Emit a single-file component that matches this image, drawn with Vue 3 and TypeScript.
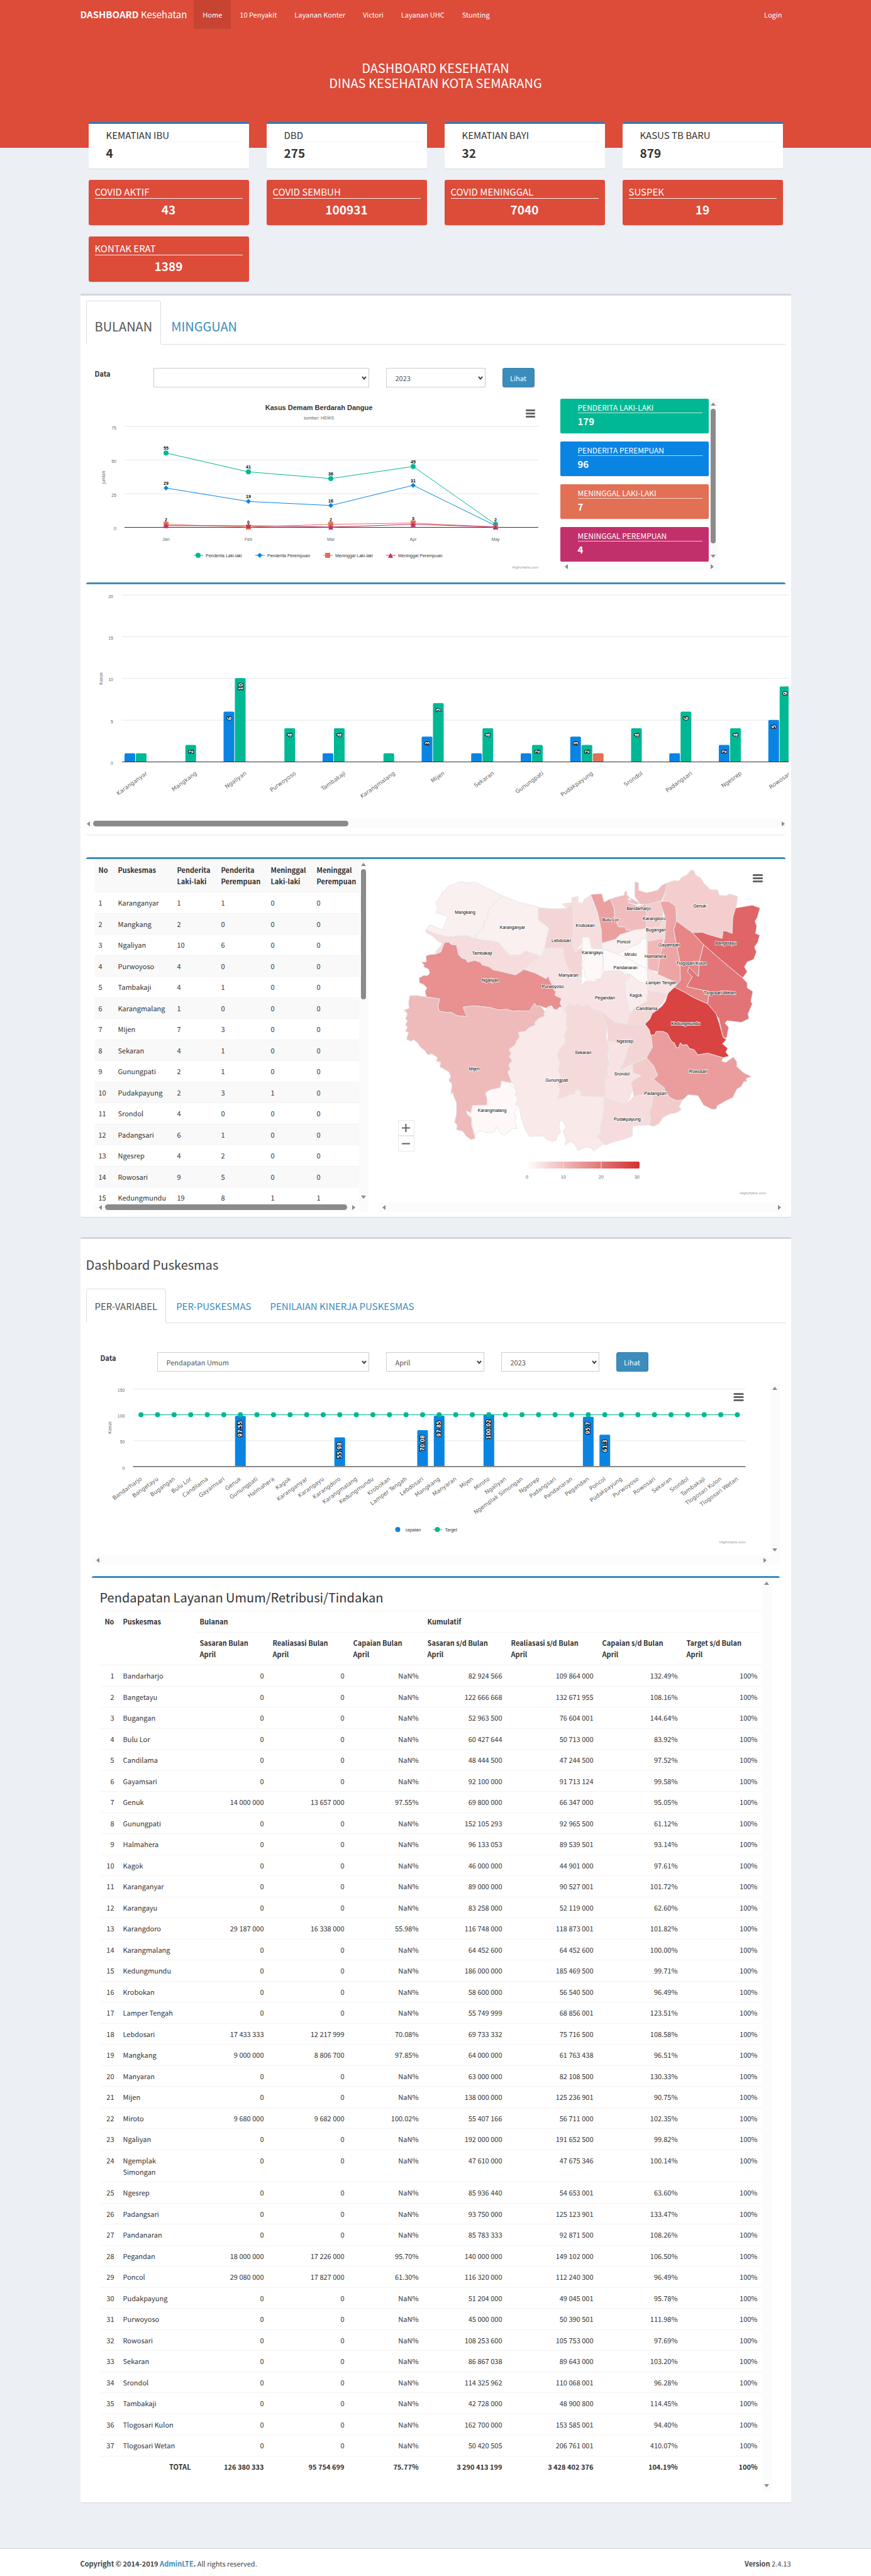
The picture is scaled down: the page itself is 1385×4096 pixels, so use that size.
<script setup lang="ts">
import { ref } from 'vue'

interface Tile { label: string; value: string }

const navItems = ['Home', '10 Penyakit', 'Layanan Konter', 'Victori', 'Layanan UHC', 'Stunting']

const whiteTiles: Tile[] = [
  { label: 'KEMATIAN IBU', value: '4' },
  { label: 'DBD', value: '275' },
  { label: 'KEMATIAN BAYI', value: '32' },
  { label: 'KASUS TB BARU', value: '879' },
]
const redTiles: Tile[] = [
  { label: 'COVID AKTIF', value: '43' },
  { label: 'COVID SEMBUH', value: '100931' },
  { label: 'COVID MENINGGAL', value: '7040' },
  { label: 'SUSPEK', value: '19' },
  { label: 'KONTAK ERAT', value: '1389' },
]
const caseTiles = [
  { label: 'PENDERITA LAKI-LAKI', value: '179', tone: 'green' },
  { label: 'PENDERITA PEREMPUAN', value: '96', tone: 'blue' },
  { label: 'MENINGGAL LAKI-LAKI', value: '7', tone: 'orange' },
  { label: 'MENINGGAL PEREMPUAN', value: '4', tone: 'pink' },
]

const disease = ref('')
const yearA = ref('2023')
const variable = ref('Pendapatan Umum')
const month = ref('April')
const yearB = ref('2023')

/* Monthly line chart */
const months = ['Jan', 'Feb', 'Mar', 'Apr', 'May']
const monthX = (i: number) => 127 + i * 131
const caseY = (v: number) => 204 - v * 2.14
const lineSeries = [
  { name: 'Penderita Laki-laki', color: '#00b894', shape: 'circle', data: [55, 41, 36, 45, 2], lx: 178 },
  { name: 'Penderita Perempuan', color: '#0984e3', shape: 'diamond', data: [29, 19, 16, 31, 1], lx: 276 },
  { name: 'Meninggal Laki-laki', color: '#e17055', shape: 'square', data: [2, 0, 2, 3, 0], lx: 384 },
  { name: 'Meninggal Perempuan', color: '#c2306b', shape: 'triangle', data: [1, 1, 0, 2, 0], lx: 484 },
]
const linePoints = (data: number[]) => data.map((v, i) => `${monthX(i)},${caseY(v)}`).join(' ')
const lineLabels = [
  { i: 0, v: 55 }, { i: 1, v: 41 }, { i: 2, v: 36 }, { i: 3, v: 45 }, { i: 4, v: 2 },
  { i: 0, v: 29 }, { i: 1, v: 19 }, { i: 2, v: 16 }, { i: 3, v: 31 },
  { i: 0, v: 2 }, { i: 1, v: 0 }, { i: 2, v: 2 }, { i: 3, v: 3 },
]
function markerPath(shape: string, x: number, y: number): string {
  if (shape === 'circle') return `M${x - 4},${y}a4,4 0 1,0 8,0a4,4 0 1,0 -8,0`
  if (shape === 'diamond') return `M${x},${y - 4}l4,4l-4,4l-4,-4z`
  if (shape === 'square') return `M${x - 4},${y - 4}h8v8h-8z`
  return `M${x},${y - 4}l4,8h-8z`
}

/* Cases per puskesmas: [name, male, female, male deaths, female deaths] */
type CaseRow = [string, number, number, number, number]
const cases: CaseRow[] = [
  ['Karanganyar', 1, 1, 0, 0], ['Mangkang', 2, 0, 0, 0], ['Ngaliyan', 10, 6, 0, 0],
  ['Purwoyoso', 4, 0, 0, 0], ['Tambakaji', 4, 1, 0, 0], ['Karangmalang', 1, 0, 0, 0],
  ['Mijen', 7, 3, 0, 0], ['Sekaran', 4, 1, 0, 0], ['Gunungpati', 2, 1, 0, 0],
  ['Pudakpayung', 2, 3, 1, 0], ['Srondol', 4, 0, 0, 0], ['Padangsari', 6, 1, 0, 0],
  ['Ngesrep', 4, 2, 0, 0], ['Rowosari', 9, 5, 0, 0], ['Kedungmundu', 19, 8, 1, 1],
]
const bars = cases.slice(0, 14).flatMap(([, male, female, dead], i) => {
  const x = 78 + i * 78.75
  return [
    { x: x - 17, v: female, color: '#0984e3' },
    { x: x + 1, v: male, color: '#00b894' },
    { x: x + 19, v: dead, color: '#e17055' },
  ].filter((b) => b.v > 0)
})
const barTop = (v: number) => 282 - v * 13.27
const barPath = (x: number, top: number, base: number) =>
  `M${x},${base}V${top + 2}q0,-2 2,-2h13q2,0 2,2V${base}z`

/* Revenue table */
type RevenueRow = [string, string, string, string, string, string, string]
const z = (name: string, a: string, b: string, c: string): RevenueRow => [name, '0', '0', 'NaN%', a, b, c]
const revenue: RevenueRow[] = [
  z('Bandarharjo', '82 924 566', '109 864 000', '132.49%'),
  z('Bangetayu', '122 666 668', '132 671 955', '108.16%'),
  z('Bugangan', '52 963 500', '76 604 001', '144.64%'),
  z('Bulu Lor', '60 427 644', '50 713 000', '83.92%'),
  z('Candilama', '48 444 500', '47 244 500', '97.52%'),
  z('Gayamsari', '92 100 000', '91 713 124', '99.58%'),
  ['Genuk', '14 000 000', '13 657 000', '97.55%', '69 800 000', '66 347 000', '95.05%'],
  z('Gunungpati', '152 105 293', '92 965 500', '61.12%'),
  z('Halmahera', '96 133 053', '89 539 501', '93.14%'),
  z('Kagok', '46 000 000', '44 901 000', '97.61%'),
  z('Karanganyar', '89 000 000', '90 527 001', '101.72%'),
  z('Karangayu', '83 258 000', '52 119 000', '62.60%'),
  ['Karangdoro', '29 187 000', '16 338 000', '55.98%', '116 748 000', '118 873 001', '101.82%'],
  z('Karangmalang', '64 452 600', '64 452 600', '100.00%'),
  z('Kedungmundu', '186 000 000', '185 469 500', '99.71%'),
  z('Krobokan', '58 600 000', '56 540 500', '96.49%'),
  z('Lamper Tengah', '55 749 999', '68 856 001', '123.51%'),
  ['Lebdosari', '17 433 333', '12 217 999', '70.08%', '69 733 332', '75 716 500', '108.58%'],
  ['Mangkang', '9 000 000', '8 806 700', '97.85%', '64 000 000', '61 763 438', '96.51%'],
  z('Manyaran', '63 000 000', '82 108 500', '130.33%'),
  z('Mijen', '138 000 000', '125 236 901', '90.75%'),
  ['Miroto', '9 680 000', '9 682 000', '100.02%', '55 407 166', '56 711 000', '102.35%'],
  z('Ngaliyan', '192 000 000', '191 652 500', '99.82%'),
  z('Ngemplak Simongan', '47 610 000', '47 675 346', '100.14%'),
  z('Ngesrep', '85 936 440', '54 653 001', '63.60%'),
  z('Padangsari', '93 750 000', '125 123 901', '133.47%'),
  z('Pandanaran', '85 783 333', '92 871 500', '108.26%'),
  ['Pegandan', '18 000 000', '17 226 000', '95.70%', '140 000 000', '149 102 000', '106.50%'],
  ['Poncol', '29 080 000', '17 827 000', '61.30%', '116 320 000', '112 240 300', '96.49%'],
  z('Pudakpayung', '51 204 000', '49 045 001', '95.78%'),
  z('Purwoyoso', '45 000 000', '50 390 501', '111.98%'),
  z('Rowosari', '108 253 600', '105 753 000', '97.69%'),
  z('Sekaran', '86 867 038', '89 643 000', '103.20%'),
  z('Srondol', '114 325 962', '110 068 001', '96.28%'),
  z('Tambakaji', '42 728 000', '48 900 800', '114.45%'),
  z('Tlogosari Kulon', '162 700 000', '153 585 001', '94.40%'),
  z('Tlogosari Wetan', '50 420 505', '206 761 001', '410.07%'),
]
const reachX = (i: number) => 77.7 + i * 26.34
const reachBars = revenue
  .map((r, i) => ({ x: reachX(i), v: parseFloat(r[3]) }))
  .filter((b) => !Number.isNaN(b.v))
const reachY = (v: number) => 132.6 - v * 0.823

/* District map, outlines on a 1568 unit grid */
const MX = 0.4429
const MY = 0.3926
interface District { color: string; d: string }
const districts: District[] = [
  { color: '#faf0f0', d: '340,156 360,160 382,157 398,164 425,180 450,194 482,212 474,228 460,240 450,250 433,266 430,298 418,320 412,345 395,360 388,372 390,388 370,376 350,374 320,375 290,379 245,368 208,350 222,330 268,350 278,322 288,296 245,280 250,262 243,240 262,212 266,200 280,185 290,172 315,163 325,157' },
  { color: '#faf0f0', d: '482,212 540,238 612,258 612,310 632,326 650,345 647,390 635,430 630,460 600,450 565,435 550,452 510,453 490,430 470,403 445,396 390,392 388,372 400,355 415,340 418,320 430,298 433,266 460,240' },
  { color: '#f6dcdc', d: '208,350 245,368 290,379 350,374 390,388 445,396 470,403 490,430 510,453 550,452 565,435 600,450 622,462 590,480 565,508 530,533 500,525 450,513 425,500 400,480 360,480 340,466 325,455 318,415 290,400 275,402 262,440 245,450 243,440 268,405 250,395 232,375 208,360' },
  { color: '#e99090', d: '275,402 290,400 300,410 318,412 325,450 338,466 350,468 358,482 383,474 404,482 410,492 435,500 450,513 470,517 530,533 548,520 560,510 600,525 640,548 648,536 652,552 665,580 668,595 675,600 672,615 695,628 690,648 697,662 685,665 680,674 668,672 660,658 650,660 640,668 618,658 605,660 598,648 590,662 580,680 540,678 520,680 500,672 470,675 440,665 380,658 342,663 355,702 320,698 300,685 285,685 255,680 252,660 257,630 210,622 205,600 212,585 200,572 185,565 184,545 200,535 215,535 222,525 218,510 200,500 202,492 192,480 210,480 208,455 225,450 245,448 262,440' },
  { color: '#efbaba', d: '150,617 175,616 210,622 257,630 252,660 255,680 285,685 300,685 320,698 355,702 342,663 380,658 440,665 470,675 500,672 520,680 540,678 580,680 590,662 598,648 605,660 618,658 635,680 632,692 636,700 615,708 600,725 600,737 580,745 565,762 540,765 545,785 533,800 530,815 506,835 515,850 508,865 518,880 505,898 512,915 502,925 510,950 520,970 480,963 475,990 440,998 422,1010 428,1035 428,1060 375,1062 370,1092 353,1083 358,1100 372,1110 372,1140 378,1160 385,1195 370,1200 352,1185 340,1165 318,1160 320,1140 311,1130 318,1095 318,1050 310,1030 305,1010 298,1015 302,975 290,960 298,945 290,925 270,912 258,905 262,885 245,883 250,868 230,852 215,857 205,840 188,825 180,810 165,795 155,802 138,793 146,765 135,762 142,745 135,735 142,718 135,710 142,690 130,675 148,668 146,645' },
  { color: '#fef8f8', d: '480,963 510,970 518,985 535,998 530,1020 540,1035 530,1058 542,1062 525,1090 530,1105 528,1130 536,1155 520,1155 490,1182 478,1175 460,1148 455,1168 430,1172 410,1165 395,1168 385,1185 375,1150 372,1110 358,1100 370,1092 375,1062 428,1060 428,1035 422,1010 440,998 475,990' },
  { color: '#f9e9e9', d: '640,673 650,660 668,672 680,674 697,665 715,690 712,735 718,745 705,780 710,805 690,830 680,860 690,890 685,920 693,945 682,975 690,1000 682,1035 720,1020 740,1015 745,998 765,1000 765,1022 850,1027 845,1055 852,1070 845,1100 843,1130 835,1150 838,1170 820,1185 850,1215 830,1230 810,1247 800,1232 780,1230 755,1245 740,1215 725,1208 708,1222 712,1195 700,1165 712,1150 697,1122 688,1128 686,1150 692,1170 680,1185 676,1202 662,1208 640,1198 630,1185 580,1187 565,1160 550,1110 542,1062 530,1058 540,1035 530,1020 535,998 515,965 510,950 502,925 512,915 505,898 518,880 508,865 515,850 506,835 530,815 533,800 545,785 540,765 565,762 580,745 600,737 600,725 615,708 636,700 632,692' },
  { color: '#f5dada', d: '715,655 728,648 740,660 755,648 765,662 790,650 810,672 835,670 855,705 860,740 855,780 865,830 860,860 866,890 858,915 862,940 850,960 855,1000 848,1027 765,1022 765,1000 745,998 740,1015 720,1020 682,1035 690,1000 682,975 693,945 685,920 690,890 680,860 690,830 710,805 705,780 718,745 712,735 715,690 697,665' },
  { color: '#f8e3e4', d: '765,575 780,558 810,560 836,545 848,518 905,515 925,532 940,530 940,548 920,558 925,600 930,640 940,690 930,732 885,725 855,700 835,680 810,672 790,650 765,662 755,610' },
  { color: '#f8e3e4', d: '635,425 700,422 708,480 735,535 768,540 765,580 768,630 765,662 755,648 740,660 728,648 715,655 705,680 697,662 690,648 695,628 672,615 675,600 665,580 652,552 648,536 640,548 600,525 560,510 590,480 622,462' },
  { color: '#f4d5d5', d: '612,260 660,265 710,264 735,245 738,320 735,415 745,440 768,420 768,540 735,535 708,480 700,422 635,425 640,390 650,345 632,326 612,310' },
  { color: '#f7dede', d: '697,245 732,240 732,220 755,215 755,240 770,242 778,225 800,210 808,240 825,280 832,320 838,375 840,428 805,425 795,380 770,380 765,410 745,440 735,415 738,320 735,245 710,260' },
  { color: '#ec9f9f', d: '800,207 840,204 848,238 870,225 885,265 885,300 900,338 925,338 928,352 942,350 942,362 905,370 890,388 840,404 838,350 825,280' },
  { color: '#f1bcbe', d: '870,225 900,215 920,210 922,196 930,195 930,210 938,215 935,240 970,255 1000,245 1000,345 942,362 942,350 928,352 925,338 900,338 885,300 885,265' },
  { color: '#f1bcbe', d: '958,155 972,160 972,190 1000,200 1040,190 1055,170 1075,160 1070,190 1055,232 1000,248 976,245 958,215' },
  { color: '#f1bcbe', d: '930,225 946,232 942,220 975,243 965,248 940,240' },
  { color: '#f4cccc', d: '1000,248 1055,232 1060,300 1048,340 1000,345' },
  { color: '#f5d8d8', d: '1000,340 1048,340 1060,300 1070,320 1065,385 1003,397' },
  { color: '#f1b8b8', d: '1003,397 1062,385 1052,440 1048,522 1005,510' },
  { color: '#eda4a4', d: '1050,240 1065,232 1085,235 1108,255 1110,315 1098,350 1110,420 1120,480 1122,555 1112,567 1040,530 1052,440 1066,385 1070,310' },
  { color: '#f4cece', d: '1075,160 1100,150 1115,152 1130,135 1145,128 1160,108 1172,112 1176,128 1195,140 1205,160 1230,188 1255,188 1262,210 1285,212 1300,205 1328,215 1322,262 1310,300 1308,365 1285,355 1275,355 1272,385 1225,370 1200,360 1165,362 1108,315 1105,255 1080,235 1058,235 1070,190' },
  { color: '#e06568', d: '1320,262 1380,250 1408,262 1398,300 1390,315 1396,335 1392,365 1407,372 1400,400 1388,420 1395,440 1385,470 1362,480 1352,500 1362,520 1345,545 1265,470 1205,410 1165,362 1200,360 1225,370 1272,385 1275,355 1285,355 1308,365 1310,300' },
  { color: '#e88585', d: '1108,315 1165,362 1205,410 1190,480 1187,540 1152,500 1148,520 1165,540 1145,580 1225,600 1220,650 1170,625 1140,605 1100,582 1122,555 1120,480 1098,350' },
  { color: '#e27377', d: '1205,410 1265,470 1345,545 1362,565 1362,585 1382,600 1375,640 1380,650 1365,690 1368,710 1340,725 1290,718 1282,728 1295,745 1288,790 1275,785 1260,710 1220,650 1225,600 1145,580 1165,540 1148,520 1152,500 1187,540 1190,480' },
  { color: '#d94342', d: '1100,582 1140,605 1170,625 1220,650 1250,690 1262,730 1275,785 1287,795 1273,812 1292,830 1285,845 1297,862 1275,868 1220,850 1185,857 1170,835 1155,832 1145,815 1130,818 1122,808 1115,828 1108,828 1100,808 1090,802 1075,770 1060,762 1035,762 1030,775 1015,778 1010,755 995,732 1012,712 1020,690 1055,660 1068,640 1078,605' },
  { color: '#eb9d9e', d: '1015,778 1030,775 1035,762 1060,762 1075,770 1090,802 1100,808 1108,828 1115,828 1122,808 1130,818 1145,815 1155,832 1170,835 1185,857 1220,850 1275,868 1270,882 1285,887 1312,865 1325,885 1325,905 1350,930 1378,945 1358,952 1360,965 1350,965 1340,985 1325,995 1310,1030 1290,1040 1255,1062 1250,1077 1235,1077 1205,1060 1185,1022 1150,1018 1125,1045 1105,1040 1085,1030 1065,1000 1025,955 1040,940 1025,900 1000,868 1020,825' },
  { color: '#f5d8d8', d: '1005,597 1035,600 1075,610 1060,645 1030,680 1020,690 1012,712 995,732 932,732 940,690 960,665 1000,640' },
  { color: '#f4d5d5', d: '835,678 885,725 930,732 995,732 1010,755 1018,790 1022,825 1000,868 950,893 905,918 920,880 940,815 862,800 860,740' },
  { color: '#f8e3e4', d: '862,800 940,815 920,880 905,918 950,895 952,930 982,940 960,955 945,970 950,1000 940,1030 925,1058 890,1045 850,1028 855,1000 850,960 862,940 858,915 866,890' },
  { color: '#f3cbcb', d: '950,895 1000,868 1025,900 1040,940 1025,955 1065,990 1065,1005 1085,1030 1105,1042 1130,1038 1118,1065 1125,1080 1105,1092 1085,1095 1060,1110 1045,1135 1025,1147 1010,1140 1015,1110 1010,1090 1018,1070 1025,1010 955,1025 945,970 960,955 982,940 952,930' },
  { color: '#f6dcdd', d: '850,1028 925,1058 955,1025 1025,1010 1018,1070 1010,1090 1015,1110 1010,1140 950,1145 950,1185 915,1200 885,1208 852,1222 822,1188 838,1170 835,1150 845,1100' },
  { color: '#f9ecec', d: '920,560 940,548 940,530 975,560 1005,570 1005,600 1000,640 960,665 940,685 930,640' },
  { color: '#f8e3e4', d: '1005,508 1040,530 1112,567 1098,585 1075,610 1035,600 1005,597' },
  { color: '#fef8f8', d: '770,380 795,380 803,425 843,428 843,490 838,548 812,550 795,560 780,540 778,515 765,490 780,465 768,440' },
  { color: '#faf0f0', d: '840,404 890,388 905,370 960,350 1000,345 1000,385 985,385 975,405 935,425 895,448 843,428' },
  { color: '#fefafa', d: '895,448 935,425 975,405 985,385 1000,385 1003,508 965,490 955,478' },
  { color: '#fefafa', d: '843,428 895,448 955,478 965,490 1003,508 1005,570 975,560 940,530 905,515 848,518' },
]
const places: [string, number, number][] = [
  ['Mangkang', 349, 277], ['Karanganyar', 519, 339], ['Tambakaji', 410, 444], ['Ngaliyan', 440, 552],
  ['Purwoyoso', 664, 577], ['Manyaran', 720, 532], ['Lebdosari', 694, 391], ['Krobokan', 780, 330],
  ['Bulu Lor', 871, 308], ['Bandarharjo', 972, 262], ['Karangdoro', 1028, 302], ['Bugangan', 1034, 348],
  ['Gayamsari', 1081, 409], ['Genuk', 1191, 251], ['Bangetayu', 1285, 402], ['Poncol', 918, 398],
  ['Karangayu', 806, 440], ['Miroto', 943, 448], ['Halmahera', 1032, 457], ['Tlogosari Kulon', 1162, 485],
  ['Pandanaran', 925, 502], ['Lamper Tengah', 1053, 562], ['Pegandan', 851, 625], ['Kagok', 962, 613],
  ['Candilama', 1001, 667], ['Tlogosari Wetan', 1263, 604], ['Kedungmundu', 1141, 729], ['Ngesrep', 923, 801],
  ['Sekaran', 773, 846], ['Mijen', 382, 911], ['Gunungpati', 678, 957], ['Srondol', 912, 933],
  ['Rowosari', 1186, 922], ['Padangsari', 1032, 1011], ['Karangmalang', 446, 1080], ['Pudakpayung', 931, 1115],
]
</script>

<template>
  <div class="page">
    <header class="hero">
      <nav class="navbar wrap">
        <a href="#" class="brand"><b>DASHBOARD</b> Kesehatan</a>
        <a v-for="(item, i) in navItems" :key="item" href="#" class="nav-link" :class="{ active: i === 0 }">{{ item }}</a>
        <a href="#" class="nav-link login">Login</a>
      </nav>
      <h1>DASHBOARD KESEHATAN<br />DINAS KESEHATAN KOTA SEMARANG</h1>
    </header>

    <main class="wrap">
      <section class="tiles">
        <div v-for="t in whiteTiles" :key="t.label" class="tile white">
          <div class="tile-label">{{ t.label }}</div>
          <div class="tile-value">{{ t.value }}</div>
        </div>
        <div v-for="t in redTiles" :key="t.label" class="tile red">
          <div class="tile-label">{{ t.label }}</div>
          <div class="tile-value">{{ t.value }}</div>
        </div>
      </section>

      <section class="box">
        <div class="tabs big">
          <a href="#" class="tab active">BULANAN</a>
          <a href="#" class="tab">MINGGUAN</a>
        </div>
        <form class="filters" @submit.prevent>
          <label for="disease">Data</label>
          <span class="select wide">
            <select id="disease" v-model="disease"><option value=""></option></select>
            <svg class="chev" viewBox="0 0 8 6"><path d="M1 1l3 3.6L7 1" /></svg>
          </span>
          <span class="select">
            <select v-model="yearA" aria-label="Tahun"><option>2023</option></select>
            <svg class="chev" viewBox="0 0 8 6"><path d="M1 1l3 3.6L7 1" /></svg>
          </span>
          <button type="submit">Lihat</button>
        </form>

        <div class="monthly">
          <svg class="line-chart chart" viewBox="0 0 740 292">
            <text class="title" x="370" y="18" text-anchor="middle">Kasus Demam Berdarah Dangue</text>
            <text class="t" x="370" y="33" text-anchor="middle">sumber: HEWS</text>
            <g class="menu"><rect v-for="k in 3" :key="k" x="699" :y="12 + k * 5" width="15" height="3" rx="1" /></g>
            <g v-for="v in [0, 25, 50, 75]" :key="v">
              <rect :class="v ? 'grid' : 'axis'" x="61" :y="caseY(v)" width="658" height="1" />
              <text class="t" x="48" :y="caseY(v) + 5" text-anchor="end">{{ v }}</text>
            </g>
            <text class="t" transform="translate(30 125) rotate(-90)" text-anchor="middle">jumlah</text>
            <text v-for="(m, i) in months" :key="m" class="t" :x="monthX(i)" y="226" text-anchor="middle">{{ m }}</text>
            <g v-for="s in lineSeries" :key="s.name">
              <polyline :points="linePoints(s.data)" fill="none" :stroke="s.color" />
              <path v-for="(v, i) in s.data" :key="i" :d="markerPath(s.shape, monthX(i), caseY(v))" :fill="s.color" />
              <path :d="`M${s.lx - 7},249h15`" :stroke="s.color" />
              <path :d="markerPath(s.shape, s.lx, 249)" :fill="s.color" />
              <text class="t dark" :x="s.lx + 12" y="252">{{ s.name }}</text>
            </g>
            <text v-for="(l, k) in lineLabels" :key="k" class="val" :x="monthX(l.i)" :y="caseY(l.v) - 5" text-anchor="middle">{{ l.v }}</text>
            <text class="credit" x="719" y="270" text-anchor="end">Highcharts.com</text>
          </svg>

          <div class="case-panel">
            <div class="case-main">
              <div class="case-list">
                <div v-for="t in caseTiles" :key="t.label" class="case" :class="t.tone">
                  <div class="case-label">{{ t.label }}</div>
                  <div class="case-value">{{ t.value }}</div>
                </div>
              </div>
              <div class="sb v"><i class="up"></i><span class="thumb case-thumb"></span><i class="down"></i></div>
            </div>
            <div class="sb h"><i class="left"></i><i class="right"></i></div>
          </div>
        </div>

        <div class="subbox bar-box">
          <svg class="bar-chart chart" viewBox="0 0 1117 373">
            <g v-for="v in [0, 5, 10, 15, 20]" :key="v">
              <rect class="grid" x="57" :y="barTop(v)" width="1060" height="1" />
              <text class="t" x="43" :y="barTop(v) + 5" text-anchor="end">{{ v }}</text>
            </g>
            <text class="t" transform="translate(26 150) rotate(-90)" text-anchor="middle">Kasus</text>
            <g v-for="(b, k) in bars" :key="k">
              <path :d="barPath(b.x, barTop(b.v), 282)" :fill="b.color" />
              <text v-if="b.v > 1" class="bar-val" :transform="`translate(${b.x + 12} ${barTop(b.v) + 8}) rotate(-90)`" text-anchor="end">{{ b.v }}</text>
            </g>
            <rect class="axis" x="57" y="282" width="1060" height="1" />
            <text v-for="(c, i) in cases.slice(0, 14)" :key="c[0]" class="cat" :transform="`translate(${98 + i * 78.75} 302) rotate(-36)`" text-anchor="end">{{ c[0] }}</text>
          </svg>
          <div class="sb h bar-sb"><i class="left"></i><span class="thumb bar-thumb"></span><i class="right"></i></div>
        </div>

        <div class="subbox map-box">
          <div class="case-table">
            <div class="scroll-main">
              <div class="clip">
                <table class="small-table">
                  <colgroup><col class="c1" /><col class="c2" /><col class="c3" /><col class="c4" /><col class="c5" /><col class="c6" /></colgroup>
                  <thead>
                    <tr><th>No</th><th>Puskesmas</th><th>Penderita Laki-laki</th><th>Penderita Perempuan</th><th>Meninggal Laki-laki</th><th>Meninggal Perempuan</th></tr>
                  </thead>
                  <tbody>
                    <tr v-for="(c, i) in cases" :key="c[0]"><td>{{ i + 1 }}</td><td v-for="(v, k) in c" :key="k">{{ v }}</td></tr>
                  </tbody>
                </table>
              </div>
              <div class="sb v"><i class="up"></i><span class="thumb table-thumb"></span><i class="down"></i></div>
            </div>
            <div class="sb h cornered"><i class="left"></i><span class="thumb wide-thumb"></span><i class="right"></i></div>
          </div>

          <div class="map-col">
            <div class="map-area">
              <svg class="chart map-svg" viewBox="0 0 648 546">
                <defs>
                  <linearGradient id="scale"><stop offset="0" stop-color="#fff" /><stop offset="1" stop-color="#d32f2f" /></linearGradient>
                </defs>
                <g :transform="`translate(-16 -25) scale(${MX} ${MY})`" class="land">
                  <polygon v-for="(m, k) in districts" :key="k" :points="m.d" :fill="m.color" />
                </g>
                <text v-for="p in places" :key="p[0]" class="place" :x="p[1] * MX - 16" :y="p[2] * MY - 22" text-anchor="middle">{{ p[0] }}</text>
                <g class="menu"><rect v-for="k in 3" :key="k" x="596" :y="19 + k * 5" width="16" height="3" rx="1" /></g>
                <rect x="236" y="481" width="180" height="11" rx="2" fill="url(#scale)" />
                <path d="M295 481v11M355 481v11" stroke="#f7dada" />
                <text class="t" x="237" y="508" text-anchor="middle">0</text>
                <text class="t" x="295" y="508" text-anchor="middle">10</text>
                <text class="t" x="355" y="508" text-anchor="middle">20</text>
                <text class="t" x="412" y="508" text-anchor="middle">30</text>
                <text class="credit" x="617" y="533" text-anchor="end">Highcharts.com</text>
              </svg>
              <div class="zoom">
                <button type="button" aria-label="Zoom in"><svg viewBox="0 0 14 14"><path d="M7 1v12M1 7h12" /></svg></button>
                <button type="button" aria-label="Zoom out"><svg viewBox="0 0 14 14"><path d="M1 7h12" /></svg></button>
              </div>
            </div>
            <div class="sb h"><i class="left"></i><i class="right"></i></div>
          </div>
        </div>
      </section>

      <section class="box second">
        <h2>Dashboard Puskesmas</h2>
        <div class="tabs">
          <a href="#" class="tab active">PER-VARIABEL</a>
          <a href="#" class="tab">PER-PUSKESMAS</a>
          <a href="#" class="tab">PENILAIAN KINERJA PUSKESMAS</a>
        </div>
        <div class="inner">
          <form class="filters lower" @submit.prevent>
            <label for="variable">Data</label>
            <span class="select wide">
              <select id="variable" v-model="variable"><option>Pendapatan Umum</option></select>
              <svg class="chev" viewBox="0 0 8 6"><path d="M1 1l3 3.6L7 1" /></svg>
            </span>
            <span class="select">
              <select v-model="month" aria-label="Bulan"><option>April</option></select>
              <svg class="chev" viewBox="0 0 8 6"><path d="M1 1l3 3.6L7 1" /></svg>
            </span>
            <span class="select">
              <select v-model="yearB" aria-label="Tahun"><option>2023</option></select>
              <svg class="chev" viewBox="0 0 8 6"><path d="M1 1l3 3.6L7 1" /></svg>
            </span>
            <button type="submit">Lihat</button>
          </form>

          <div class="reach">
            <svg class="chart reach-svg" viewBox="0 0 1078 274">
              <g v-for="v in [0, 50, 100, 150]" :key="v">
                <rect class="grid" x="65" :y="reachY(v)" width="974" height="1" />
                <text class="t" x="52" :y="reachY(v) + 5" text-anchor="end">{{ v }}</text>
              </g>
              <text class="t" transform="translate(30 71) rotate(-90)" text-anchor="middle">Kasus</text>
              <g v-for="(b, k) in reachBars" :key="k">
                <path :d="barPath(b.x - 8.5, reachY(b.v), 133)" fill="#0984e3" />
              </g>
              <rect class="axis soft" x="65" y="132" width="974" height="2" />
              <path :d="`M${reachX(0)},50.5H${reachX(36)}`" stroke="#00b894" />
              <circle v-for="(r, i) in revenue" :key="r[0]" :cx="reachX(i)" cy="50.5" r="4" fill="#00b894" />
              <text v-for="(b, k) in reachBars" :key="k" class="bar-val" :transform="`translate(${b.x + 3} ${reachY(b.v) + 8}) rotate(-90)`" text-anchor="end">{{ b.v }}</text>
              <text v-for="(r, i) in revenue" :key="r[0]" class="cat" :transform="`translate(${reachX(i) + 2} 154) rotate(-36)`" text-anchor="end">{{ r[0] }}</text>
              <circle cx="486" cy="233" r="4" fill="#0984e3" />
              <text class="t dark" x="498" y="236">capaian</text>
              <path d="M542 233h15" stroke="#00b894" /><circle cx="549" cy="233" r="4" fill="#00b894" />
              <text class="t dark" x="561" y="236">Target</text>
              <g class="menu"><rect v-for="k in 3" :key="k" x="1020" :y="11 + k * 5" width="16" height="3" rx="1" /></g>
              <text class="credit" x="1039" y="255" text-anchor="end">Highcharts.com</text>
            </svg>
            <div class="sb v"><i class="up"></i><i class="down"></i></div>
          </div>
          <div class="sb h cornered"><i class="left"></i><i class="right"></i></div>

          <div class="subbox revenue">
            <div class="revenue-main">
              <h3>Pendapatan Layanan Umum/Retribusi/Tindakan</h3>
              <table class="big-table">
                <colgroup><col class="d0" /><col class="d1" /><col class="d2" /><col class="d3" /><col class="d4" /><col class="d5" /><col class="d6" /><col class="d7" /><col class="d8" /></colgroup>
                <thead>
                  <tr><th rowspan="2" class="num">No</th><th rowspan="2">Puskesmas</th><th colspan="3">Bulanan</th><th colspan="4">Kumulatif</th></tr>
                  <tr>
                    <th>Sasaran Bulan<br />April</th><th>Realiasasi Bulan<br />April</th><th>Capaian Bulan<br />April</th>
                    <th>Sasaran s/d Bulan<br />April</th><th>Realiasasi s/d Bulan<br />April</th><th>Capaian s/d Bulan<br />April</th><th>Target s/d Bulan<br />April</th>
                  </tr>
                </thead>
                <tbody>
                  <tr v-for="(r, i) in revenue" :key="r[0]">
                    <td class="num">{{ i + 1 }}</td>
                    <td class="name">{{ r[0] }}</td>
                    <td v-for="k in 6" :key="k" class="num">{{ r[k] }}</td>
                    <td class="num">100%</td>
                  </tr>
                </tbody>
                <tfoot>
                  <tr>
                    <th colspan="2" class="num">TOTAL</th><th class="num">126 380 333</th><th class="num">95 754 699</th><th class="num">75.77%</th>
                    <th class="num">3 290 413 199</th><th class="num">3 428 402 376</th><th class="num">104.19%</th><th class="num">100%</th>
                  </tr>
                </tfoot>
              </table>
            </div>
            <div class="sb v"><i class="up"></i><i class="down"></i></div>
          </div>
        </div>
      </section>
    </main>

    <footer>
      <div class="wrap foot">
        <span><b>Copyright © 2014-2019 <a href="#">AdminLTE</a>.</b> All rights reserved.</span>
        <span><b>Version</b> 2.4.13</span>
      </div>
    </footer>
  </div>
</template>

<style>
body { margin: 0; background: #ecf0f5; }
</style>

<style scoped>
.page { font-family: 'Noto Sans CJK SC', 'Noto Sans', sans-serif; font-size: 11px; line-height: 18px; color: #333; }
.page *, .page *::before { box-sizing: border-box; }
a { color: #3c8dbc; text-decoration: none; }
button, select { font: inherit; }
.wrap { max-width: 1130px; margin: 0 auto; }

.hero { background: #dd4b39; color: #fff; padding-bottom: 91px; }
.navbar { display: flex; height: 46px; line-height: 46px; }
.navbar a { color: #fff; }
.brand { font-size: 15px; padding-right: 11px; }
.nav-link { padding: 0 14px; }
.nav-link.active { background: #c74433; }
.login { margin-left: auto; }
h1 { margin: 50px 0 0; font-size: 20px; line-height: 24px; font-weight: 400; text-align: center; }

.tiles { display: grid; grid-template-columns: repeat(4, 1fr); gap: 18px 28px; margin: -41px 13px 19px; }
.tile { border-radius: 3px; box-shadow: 0 1px 1px rgba(0, 0, 0, .1); }
.tile.white { background: #fff; border-top: 3px solid #337ab7; padding: 8px 10px 13px 28px; }
.tile.red { background: #dd4b39; color: #fff; padding: 9px 10px 13px; }
.tile-label { font-size: 15px; line-height: 20px; border-bottom: 1px solid #f4f4f4; white-space: nowrap; }
.tile-value { margin-top: 5px; font-size: 19px; line-height: 24px; font-weight: 700; }
.red .tile-value { text-align: center; }

.box { background: #fff; border-top: 3px solid #d2d6de; border-radius: 3px; box-shadow: 0 1px 1px rgba(0, 0, 0, .1); padding: 8px 9px; }
.box.second { margin-top: 32px; padding-bottom: 18px; }
h2 { margin: 18px 0 24px; font-size: 20px; line-height: 29px; font-weight: 400; color: #444; }
.tabs { display: flex; gap: 2px; height: 55px; border-bottom: 1px solid #ddd; font-size: 15px; line-height: 54px; }
.tabs.big { height: 70px; font-size: 20px; line-height: 79px; }
.tab { padding: 0 13px; border: 1px solid transparent; border-bottom: 0; height: 100%; }
.tab.active { color: #555; background: #fff; border-color: #ddd; border-radius: 4px 4px 0 0; box-shadow: 0 1px #fff; }

.filters { display: flex; gap: 27px; margin: 37px 0 18px; padding-left: 14px; height: 31px; }
.filters label { width: 66px; font-weight: 700; }
.select { position: relative; width: 158px; }
.select.wide { width: 343px; }
.select select { appearance: none; width: 100%; height: 31px; margin: 0; padding: 0 14px; border: 1px solid #ccc; border-radius: 0; background: #fff; color: #555; display: block; }
.chev { position: absolute; right: 4px; top: 13px; width: 8px; height: 6px; fill: none; stroke: #444; stroke-width: 2; pointer-events: none; }
.filters button { width: 51px; height: 31px; padding: 0; border: 1px solid #367fa9; border-radius: 3px; background: #3c8dbc; color: #fff; }
.filters.lower { margin: 46px 0 18px; padding-left: 14px; }
.filters.lower label { width: 63px; }
.filters.lower .wide { width: 337px; }
.filters.lower .select:not(.wide) { width: 156px; }

.chart { display: block; font-family: 'Liberation Sans', Arial, sans-serif; }
.chart .t { font-size: 7px; fill: #666; }
.chart .dark { fill: #333; }
.chart .title { font-size: 11px; font-weight: 700; fill: #333; }
.chart .val { font-size: 7px; font-weight: 700; fill: #000; }
.chart .credit { font-size: 6px; fill: #999; }
.chart .grid { fill: #e6e6e6; }
.chart .axis { fill: #333; }
.chart .axis.soft { fill: #888; }
.chart .menu { fill: #666; }
.chart .cat { font: 9px 'DejaVu Sans', sans-serif; fill: #666; }
.chart .bar-val { font: 700 8px 'DejaVu Sans', sans-serif; fill: #fff; stroke: #000; stroke-width: 2px; paint-order: stroke; stroke-linejoin: round; }
.place { font-size: 7px; fill: #000; stroke: #fff; stroke-width: 2px; stroke-opacity: .75; paint-order: stroke; }
.land polygon { stroke: #e6e6e6; stroke-width: 1px; vector-effect: non-scaling-stroke; }

.monthly { display: flex; gap: 14px; }
.line-chart { flex: 0 1 740px; min-width: 0; }
.case-panel { width: 251px; }
.case-main { display: flex; height: 259px; }
.case-list { flex: 1; overflow: hidden; }
.case { height: 55px; margin-bottom: 13px; border-radius: 2px; padding: 5px 10px 0 28px; color: #fff; box-shadow: 0 1px 1px rgba(0, 0, 0, .1); }
.case-label { font-size: 12px; line-height: 17px; border-bottom: 1px solid rgba(255, 255, 255, .7); }
.case-value { margin-top: 4px; font-size: 15px; line-height: 18px; font-weight: 700; }
.green { background: #00b894; }
.blue { background: #0984e3; }
.orange { background: #e17055; }
.pink { background: #c2306b; }

.sb { display: flex; align-items: center; background: #fbfbfb; }
.sb.h { height: 15px; padding: 0 7px; }
.sb.v { flex: 0 0 15px; flex-direction: column; padding: 6px 0; }
.sb i { width: 0; height: 0; border: 4px solid transparent; }
.sb .left { border-right: 5px solid #8b8b8b; border-left: 0; }
.sb .right { border-left: 5px solid #8b8b8b; border-right: 0; margin-left: auto; }
.sb .up { border-bottom: 5px solid #8b8b8b; border-top: 0; }
.sb .down { border-top: 5px solid #8b8b8b; border-bottom: 0; margin-top: auto; }
.thumb { background: #8b8b8b; border-radius: 5px; }
.v .thumb { width: 8px; margin-top: 5px; }
.h .thumb { height: 9px; margin-left: 5px; }
.case-thumb { height: 214px; }
.table-thumb { height: 207px; }
.bar-sb.sb { padding: 0 1px; }
.bar-thumb { width: 406px; }
.wide-thumb { width: 385px; }
.sb.cornered { padding-right: 21px; }

.subbox { border-top: 3px solid #3c8dbc; border-radius: 3px; box-shadow: 0 1px 1px rgba(0, 0, 0, .1); }
.bar-box { padding-bottom: 10px; }
.bar-chart { width: calc(100% + 5px); }
.map-box { display: flex; justify-content: space-between; margin-top: 36px; padding-left: 13px; box-shadow: none; }
.case-table { width: 436px; }
.scroll-main { display: flex; height: 546px; }
.clip { flex: 1; overflow: hidden; }
table { border-collapse: separate; border-spacing: 0; table-layout: fixed; width: 100%; }
th { text-align: left; vertical-align: top; font-weight: 700; }
td { vertical-align: top; }
th, td { padding: 7px 7px 8px; border-top: 1px solid #f4f4f4; }
tbody tr:nth-child(even) td { padding-bottom: 7px; }
.small-table tr:nth-child(even) td, .small-table th { background: #f9f9f9; }
.c1 { width: 31px; }
.c2 { width: 94px; }
.c3 { width: 70px; }
.c4 { width: 79px; }
.c5 { width: 73px; }
.map-col { flex: 0 1 648px; }
.map-area { position: relative; height: 546px; }
.map-svg { width: 100%; }
.zoom { position: absolute; left: 32px; top: 415px; display: flex; flex-direction: column; }
.zoom button { width: 26px; height: 25px; padding: 0; border: 1px solid #e6e6e6; background: #fff; display: grid; place-items: center; }
.zoom svg { width: 15px; height: 15px; stroke: #666; stroke-width: 2; }

.inner { padding: 0 9px; }
.reach { display: flex; height: 274px; }
.reach-svg { flex: 1; min-width: 0; }
.revenue { margin-top: 18px; display: flex; padding-right: 13px; box-shadow: none; }
.revenue-main { flex: 1; padding: 17px 0 22px 13px; }
h3 { margin: 0 0 8px; font-size: 20px; line-height: 27px; font-weight: 400; }
.big-table .num { text-align: right; }
.big-table thead th { padding-bottom: 8px; }
.d0 { width: 30px; }
.d1 { width: 122px; }
.d2 { width: 116px; }
.d3 { width: 128px; }
.d4 { width: 118px; }
.d5 { width: 133px; }
.d6 { width: 145px; }
.d7 { width: 134px; }
.big-table .name { padding-right: 20px; }

footer { margin-top: 73px; background: #fff; border-top: 1px solid #d2d6de; color: #444; }
.foot { display: flex; justify-content: space-between; padding: 14px 0; }
</style>
